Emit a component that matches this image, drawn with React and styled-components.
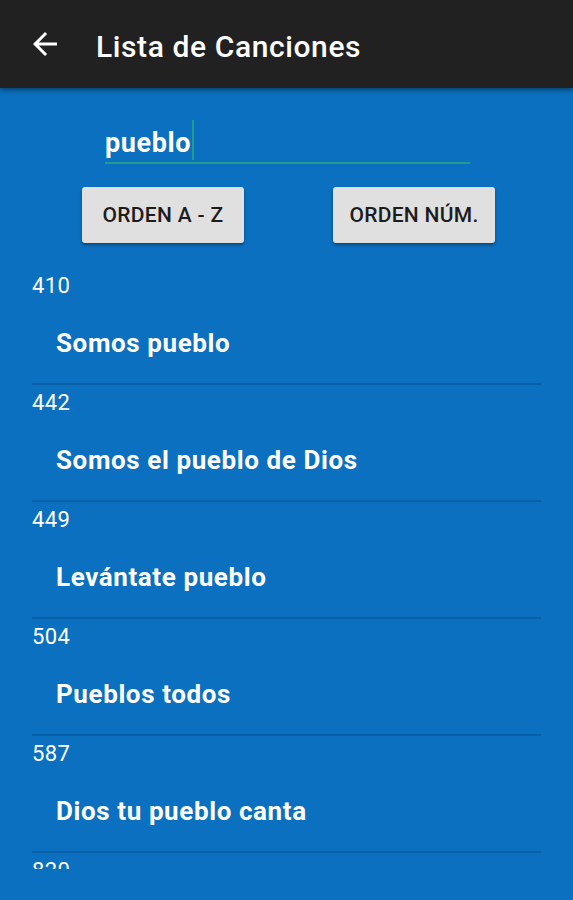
import React from "react";
import styled, { createGlobalStyle } from "styled-components";

const songs = [
  { num: "410", title: "Somos pueblo" },
  { num: "442", title: "Somos el pueblo de Dios" },
  { num: "449", title: "Levántate pueblo" },
  { num: "504", title: "Pueblos todos" },
  { num: "587", title: "Dios tu pueblo canta" },
  { num: "820", title: "Pueblo santo" },
];

const GlobalStyle = createGlobalStyle`
  html, body {
    margin: 0;
    padding: 0;
    background: #0b70bf;
  }
  body {
    font-family: Roboto, "Noto Sans", sans-serif;
    -webkit-font-smoothing: antialiased;
  }
`;

const Screen = styled.div`
  width: 573px;
  height: 900px;
  background: #0b70bf;
  display: flex;
  flex-direction: column;
  overflow: hidden;
`;

const AppBar = styled.header`
  height: 88px;
  flex-shrink: 0;
  box-sizing: border-box;
  background: #212121;
  display: flex;
  align-items: center;
  padding: 5px 0 0 27px;
  gap: 33px;
  box-shadow: 0 2px 5px rgba(0, 0, 0, 0.45);
  position: relative;
  z-index: 1;
`;

const BackIcon = styled.svg`
  width: 36px;
  height: 36px;
  display: block;
  margin-top: -6px;
`;

const Title = styled.h1`
  margin: 0;
  color: #fff;
  font-size: 30px;
  font-weight: 500;
  letter-spacing: 0.6px;
`;

const SearchRow = styled.div`
  padding: 24px 0 0 105px;
`;

const SearchField = styled.div`
  width: 365px;
  height: 52px;
  border-bottom: 2px solid #1f9d8f;
  display: flex;
  align-items: flex-end;
  box-sizing: border-box;
  padding-bottom: 4px;
`;

const SearchText = styled.span`
  color: #fff;
  font-size: 27px;
  line-height: 30px;
  font-weight: 700;
  letter-spacing: 0.6px;
`;

const Caret = styled.span`
  width: 2px;
  height: 40px;
  margin: 0 0 -2px 1px;
  background: #1f9d8f;
`;

const ButtonRow = styled.div`
  display: flex;
  gap: 89px;
  padding: 23px 0 0 82px;
`;

const SortButton = styled.button`
  width: 162px;
  height: 56px;
  border: none;
  border-radius: 3px;
  background: #e0e0e0;
  color: #1c1c1c;
  font-family: Roboto, sans-serif;
  font-size: 21px;
  font-weight: 500;
  letter-spacing: 0.3px;
  box-shadow: 0 2px 3px rgba(0, 0, 0, 0.35);
  padding: 0;
`;

const List = styled.ul`
  list-style: none;
  margin: 25px 0 0;
  padding: 0 32px;
  height: 601px;
  overflow: hidden;
  flex-shrink: 0;
`;

const Item = styled.li`
  height: 117px;
  box-sizing: border-box;
  border-bottom: 2px solid #0860a6;
`;

const Number = styled.div`
  color: #fff;
  font-size: 22px;
  line-height: 26px;
  padding-top: 5px;
  letter-spacing: 0.4px;
`;

const SongTitle = styled.div`
  color: #fff;
  font-size: 26px;
  font-weight: 700;
  line-height: 30px;
  margin-top: 29px;
  padding-left: 24px;
  letter-spacing: 0.6px;
`;

export default function App() {
  return (
    <Screen>
      <GlobalStyle />
      <AppBar>
        <BackIcon viewBox="0 0 24 24">
          <path
            d="M20 11H7.83l5.59-5.59L12 4l-8 8 8 8 1.41-1.41L7.83 13H20v-2z"
            fill="#fff"
          />
        </BackIcon>
        <Title>Lista de Canciones</Title>
      </AppBar>
      <SearchRow>
        <SearchField>
          <SearchText>pueblo</SearchText>
          <Caret />
        </SearchField>
      </SearchRow>
      <ButtonRow>
        <SortButton>ORDEN A - Z</SortButton>
        <SortButton>ORDEN NÚM.</SortButton>
      </ButtonRow>
      <List>
        {songs.map((s) => (
          <Item key={s.num}>
            <Number>{s.num}</Number>
            <SongTitle>{s.title}</SongTitle>
          </Item>
        ))}
      </List>
    </Screen>
  );
}
